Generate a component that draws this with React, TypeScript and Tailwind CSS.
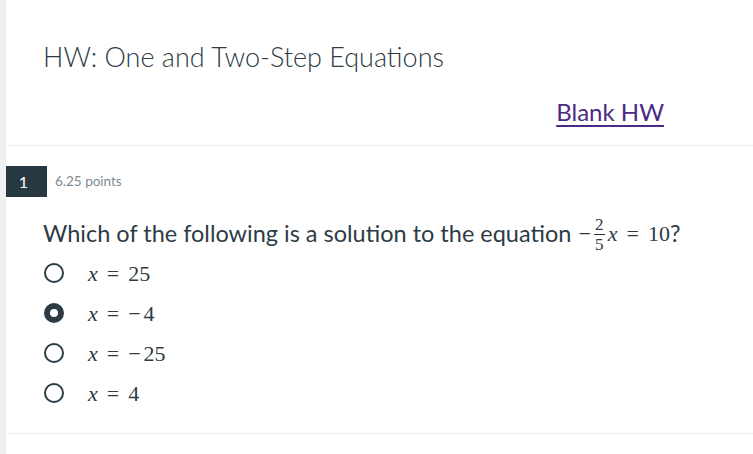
import React from 'react';

const options = [
  { value: '25', neg: false, picked: false },
  { value: '4', neg: true, picked: true },
  { value: '25', neg: true, picked: false },
  { value: '4', neg: false, picked: false },
];

const mathFont = "font-['Liberation_Serif','DejaVu_Serif',serif]";

const Radio = ({ picked }: { picked: boolean }) => (
  <span
    className={
      picked
        ? 'w-5 h-5 rounded-full border-[6px] border-[#2d3b45] bg-white shrink-0'
        : 'w-5 h-5 rounded-full border-2 border-[#2d3b45] bg-white shrink-0'
    }
  />
);

const App = () => {
  return (
    <div className="w-[753px] h-[454px] overflow-hidden bg-white border-l-[6px] border-[#f0f0f0] font-['Lato','Noto_Sans',sans-serif] text-[#2d3b45]">
      {/* Header */}
      <div className="pt-[40px] pl-[37px] pr-[89px]">
        <h1 className="text-[27px] leading-[34px] font-light">HW: One and Two-Step Equations</h1>
        <div className="flex justify-end mt-[23px]">
          <a className="text-[24px] leading-[30px] text-[#4b2a84] underline decoration-[2px] underline-offset-[4px]">
            Blank HW
          </a>
        </div>
      </div>
      <div className="ml-[2px] mt-[18px] border-t border-[#eceef0]" />

      {/* Question */}
      <div className="mt-[20px] flex items-center">
        <div className="-ml-[6px] w-[47px] h-[31px] bg-[#283843] text-white text-[16px] flex items-center justify-center">
          1
        </div>
        <span className="ml-[8px] text-[13.5px] text-[#7d8a93]">6.25 points</span>
      </div>

      <div className="pl-[37px] mt-[18px]">
        <div className="h-[38px] text-[23.5px] flex items-center">
          <span>Which of the following is a solution to the equation</span>
          <span className={`${mathFont} ml-[7px] flex items-center text-[22px] leading-[24px]`}>
            <span>−</span>
            <span className="flex flex-col items-center mx-[3px] text-[17px] leading-[17px]">
              <span>2</span>
              <span className="w-[11px] my-[1px] border-t border-[#2d3b45]" />
              <span>5</span>
            </span>
            <span className="italic">x</span>
            <span className="mx-[9px]">=</span>
            <span>10</span>
          </span>
          <span>?</span>
        </div>

        <div className="flex flex-col">
          {options.map((o, i) => (
            <div key={i} className="h-[40px] flex items-center pl-[1px]">
              <Radio picked={o.picked} />
              <span className={`${mathFont} ml-[24px] text-[22px] text-[#2d3b45]`}>
                <span className="italic">x</span>
                <span className="mx-[9px]">=</span>
                {o.neg && <span className="mr-[3px]">−</span>}
                <span>{o.value}</span>
              </span>
            </div>
          ))}
        </div>
      </div>

      <div className="ml-[2px] mt-[20px] border-t border-[#eceef0]" />
    </div>
  );
};

export default App;
